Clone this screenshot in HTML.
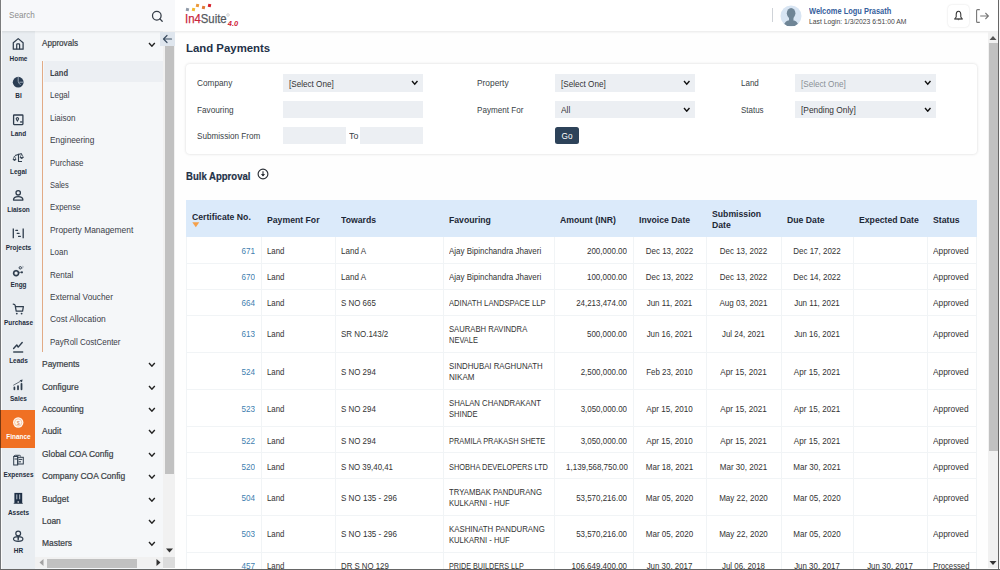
<!DOCTYPE html><html><head><meta charset="utf-8"><style>
*{box-sizing:border-box;margin:0;padding:0}
html,body{width:1000px;height:570px;overflow:hidden;background:#fff;font-family:"Liberation Sans",sans-serif;color:#333}
.a{position:absolute}
.t{position:absolute;white-space:nowrap;line-height:1}
</style></head><body>
<div class="a" style="left:175px;top:0px;width:825px;height:570px;background:#fefefe;"></div>
<div class="a" style="left:0px;top:31px;width:35px;height:539px;background:#e9edf1;"></div>
<div class="a" style="left:35px;top:31px;width:128px;height:539px;background:#f5f7f9;"></div>
<div class="a" style="left:0px;top:0px;width:1000px;height:31px;background:#fff;box-shadow:0 1px 2.5px rgba(0,0,0,0.09)"></div>
<div class="a" style="left:0px;top:0px;width:175px;height:31px;background:#f7f8fa;"></div>
<div class="t" style="left:9.00px;top:11px;font-size:9.2px;color:#8c8c8c;transform:scaleX(0.884);transform-origin:left">Search</div>
<svg class="a" style="left:149.5px;top:8.8px" width="15" height="15" viewBox="0 0 15 15"><circle cx="6.8" cy="6.7" r="4.3" fill="none" stroke="#353d47" stroke-width="1.25"/><line x1="9.9" y1="9.9" x2="12.2" y2="12.2" stroke="#353d47" stroke-width="1.3" stroke-linecap="round"/></svg>
<div class="a" style="left:163px;top:32px;width:12px;height:525px;background:#f1f1f1;"></div>
<div class="a" style="left:159.5px;top:32px;width:15.5px;height:14px;background:#dfe6ee;"></div>
<svg class="a" style="left:161px;top:33px" width="13" height="12" viewBox="0 0 13 12"><path d="M2.5 6 H10.5 M6 2.5 L2.5 6 L6 9.5" fill="none" stroke="#3d4f63" stroke-width="1.2" stroke-linecap="round" stroke-linejoin="round"/></svg>
<div class="a" style="left:165px;top:46px;width:9px;height:428px;background:#c1c1c1;"></div>
<svg class="a" style="left:166px;top:548px" width="7" height="5" viewBox="0 0 7 5"><path d="M0 0.5 H7 L3.5 4.5Z" fill="#333"/></svg>
<div class="a" style="left:35px;top:557px;width:128px;height:11px;background:#f1f1f1;"></div>
<div class="a" style="left:163px;top:557px;width:12px;height:11px;background:#dcdcdc;"></div>
<div class="a" style="left:47px;top:559px;width:90px;height:9px;background:#c1c1c1;"></div>
<svg class="a" style="left:39px;top:559px" width="5" height="7" viewBox="0 0 5 7"><path d="M4.5 0 V7 L0.5 3.5Z" fill="#a3a3a3"/></svg>
<svg class="a" style="left:156px;top:559px" width="5" height="7" viewBox="0 0 5 7"><path d="M0.5 0 V7 L4.5 3.5Z" fill="#333"/></svg>
<div class="a" style="left:988px;top:32px;width:10px;height:536px;background:#f1f1f1;"></div>
<svg class="a" style="left:989px;top:35px" width="8" height="6" viewBox="0 0 8 6"><path d="M0.5 5 H7.5 L4 1Z" fill="#555"/></svg>
<div class="a" style="left:989px;top:43px;width:9px;height:408px;background:#c1c1c1;"></div>
<svg class="a" style="left:989px;top:559.5px" width="8" height="6" viewBox="0 0 8 6"><path d="M0.5 1 H7.5 L4 5Z" fill="#333"/></svg>
<div class="a" style="left:0px;top:410px;width:35px;height:38px;background:#f07023;"></div>
<svg class="a" style="left:8px;top:34px" width="20" height="20" viewBox="0 0 20 20"><path d="M5.3 15.2 V8.8 L10.2 4.6 L15.1 8.8 V15.2 Z" fill="none" stroke="#2f3d4d" stroke-width="1.25" stroke-linejoin="round"/><path d="M8.7 15.2 V10.6 Q8.7 9.8 9.5 9.8 H10.8 Q11.6 9.8 11.6 10.6 V15.2" fill="none" stroke="#2f3d4d" stroke-width="1.2"/></svg>
<div class="t" style="left:0.50px;top:55px;font-size:7.0px;color:#1f2d3d;font-weight:bold;width:35px;text-align:center;transform:scaleX(0.92);transform-origin:center">Home</div>
<svg class="a" style="left:8px;top:72px" width="20" height="20" viewBox="0 0 20 20"><circle cx="10.2" cy="10.2" r="5.4" fill="#2b3d53"/><path d="M10.2 4.9 V9.3 Q10.4 11.2 12.6 12.9 M11.4 10.2 H15.6" fill="none" stroke="#b8c4d0" stroke-width="0.8"/></svg>
<div class="t" style="left:0.50px;top:92px;font-size:7.0px;color:#1f2d3d;font-weight:bold;width:35px;text-align:center;transform:scaleX(0.92);transform-origin:center">BI</div>
<svg class="a" style="left:8px;top:110px" width="20" height="20" viewBox="0 0 20 20"><rect x="5.6" y="5" width="9.3" height="9.6" fill="none" stroke="#2f3d4d" stroke-width="1.3" rx="0.5"/><path d="M9.4 12 L8 9.8 A1.7 1.7 0 1 1 10.8 9.8 Z" fill="#2f3d4d"/><circle cx="9.4" cy="8.9" r="0.6" fill="#fff"/><rect x="12.1" y="11.3" width="2.4" height="1.3" fill="#2f3d4d"/></svg>
<div class="t" style="left:0.50px;top:130px;font-size:7.0px;color:#1f2d3d;font-weight:bold;width:35px;text-align:center;transform:scaleX(0.92);transform-origin:center">Land</div>
<svg class="a" style="left:8px;top:148px" width="20" height="20" viewBox="0 0 20 20"><path d="M7 7.5 L13.7 5.4" stroke="#2f3d4d" stroke-width="1.1"/><path d="M10.5 5.8 V13.5 H14" fill="none" stroke="#2f3d4d" stroke-width="1.1"/><path d="M6.5 8 L5 11.5 H8 Z M13.7 6 L12 9.5 H15.4 Z" fill="none" stroke="#2f3d4d" stroke-width="0.7"/><path d="M4.8 11.3 Q6.5 14.8 8.3 11.3 Z M11.8 9.3 Q13.7 12.6 15.6 9.3 Z" fill="#2f3d4d"/></svg>
<div class="t" style="left:0.50px;top:168px;font-size:7.0px;color:#1f2d3d;font-weight:bold;width:35px;text-align:center;transform:scaleX(0.92);transform-origin:center">Legal</div>
<svg class="a" style="left:8px;top:186px" width="20" height="20" viewBox="0 0 20 20"><circle cx="10.2" cy="6.8" r="2.2" fill="none" stroke="#2f3d4d" stroke-width="1.3"/><path d="M5.5 14.1 Q5.5 10.6 10.2 10.6 Q14.9 10.6 14.9 14.1 Z" fill="none" stroke="#2f3d4d" stroke-width="1.3" stroke-linejoin="round"/></svg>
<div class="t" style="left:0.50px;top:206px;font-size:7.0px;color:#1f2d3d;font-weight:bold;width:35px;text-align:center;transform:scaleX(0.92);transform-origin:center">Liaison</div>
<svg class="a" style="left:8px;top:224px" width="20" height="20" viewBox="0 0 20 20"><path d="M5.3 4.5 V14.3 M15.2 4.5 V14.3" stroke="#2f3d4d" stroke-width="1.3"/><path d="M7.8 6.4 H9.6 M9.2 9.4 H11.1 M10.5 12.4 H12.4" stroke="#2f3d4d" stroke-width="1.1" stroke-linecap="round"/></svg>
<div class="t" style="left:0.50px;top:244px;font-size:7.0px;color:#1f2d3d;font-weight:bold;width:35px;text-align:center;transform:scaleX(0.92);transform-origin:center">Projects</div>
<svg class="a" style="left:8px;top:262px" width="20" height="20" viewBox="0 0 20 20"><circle cx="8.1" cy="11.2" r="2.4" fill="none" stroke="#2f3d4d" stroke-width="1.5"/><path d="M8.1 7.9 V8.6 M8.1 13.8 V14.5 M4.8 11.2 H5.5 M10.7 11.2 H11.4" stroke="#2f3d4d" stroke-width="1"/><circle cx="12.3" cy="5.8" r="1.2" fill="none" stroke="#2f3d4d" stroke-width="1"/><circle cx="13.9" cy="10.3" r="1.1" fill="#2f3d4d"/><path d="M11 10.3 H13" stroke="#2f3d4d" stroke-width="0.8"/><path d="M14.3 4.2 L15.2 4.5 L14.5 6.5" fill="none" stroke="#8994a0" stroke-width="0.7"/></svg>
<div class="t" style="left:0.50px;top:281px;font-size:7.0px;color:#1f2d3d;font-weight:bold;width:35px;text-align:center;transform:scaleX(0.92);transform-origin:center">Engg</div>
<svg class="a" style="left:8px;top:300px" width="20" height="20" viewBox="0 0 20 20"><path d="M5.2 4.1 Q6.8 4.1 7.1 5.2 L8.2 11.1 H14.6 L15.4 6.5 H7.4" fill="none" stroke="#2f3d4d" stroke-width="1.25" stroke-linejoin="round" stroke-linecap="round"/><circle cx="8.8" cy="13.6" r="0.9" fill="#2f3d4d"/><circle cx="13.6" cy="13.6" r="0.9" fill="#2f3d4d"/></svg>
<div class="t" style="left:0.50px;top:319px;font-size:7.0px;color:#1f2d3d;font-weight:bold;width:35px;text-align:center;transform:scaleX(0.92);transform-origin:center">Purchase</div>
<svg class="a" style="left:8px;top:338px" width="20" height="20" viewBox="0 0 20 20"><path d="M5.6 10.5 L8.8 7 L10.2 9.1 L14.2 4.5" fill="none" stroke="#2f3d4d" stroke-width="1.4" stroke-linecap="round" stroke-linejoin="round"/><path d="M5.2 14 H15.2" stroke="#2f3d4d" stroke-width="1.4"/></svg>
<div class="t" style="left:0.50px;top:357px;font-size:7.0px;color:#1f2d3d;font-weight:bold;width:35px;text-align:center;transform:scaleX(0.92);transform-origin:center">Leads</div>
<svg class="a" style="left:8px;top:375px" width="20" height="20" viewBox="0 0 20 20"><path d="M6.4 12.4 V14.3 M10 11 V14.3 M13.5 8.8 V14.3" stroke="#2f3d4d" stroke-width="1.75" stroke-linecap="round"/><path d="M5.3 10.3 L12.6 6.2" stroke="#56616d" stroke-width="0.9"/><path d="M11.6 5.3 L14.6 4.6 L13.9 7.6 Z" fill="#2f3d4d"/></svg>
<div class="t" style="left:0.50px;top:395px;font-size:7.0px;color:#1f2d3d;font-weight:bold;width:35px;text-align:center;transform:scaleX(0.92);transform-origin:center">Sales</div>
<svg class="a" style="left:8px;top:412px" width="20" height="20" viewBox="0 0 20 20"><circle cx="10.2" cy="10.5" r="5.2" fill="#fff6ef"/><circle cx="10.2" cy="10.5" r="3.6" fill="none" stroke="#f3a877" stroke-width="0.6"/><text x="10.2" y="12.6" text-anchor="middle" font-family="Liberation Sans" font-size="5.5" fill="#d78a5a">$</text></svg>
<div class="t" style="left:0.50px;top:433px;font-size:7.0px;color:#fff;font-weight:bold;width:35px;text-align:center;transform:scaleX(0.92);transform-origin:center">Finance</div>
<svg class="a" style="left:8px;top:450px" width="20" height="20" viewBox="0 0 20 20"><path d="M6 6.5 Q6 5.3 7.3 5.3 H11.5 Q12.6 5.3 12.6 6.5" fill="none" stroke="#2f3d4d" stroke-width="1"/><rect x="5.7" y="6.5" width="4" height="8.5" fill="none" stroke="#2f3d4d" stroke-width="1"/><rect x="9.7" y="7.3" width="5.6" height="6.7" fill="none" stroke="#2f3d4d" stroke-width="1"/><path d="M6.5 9 H9 M10.6 9.4 H14.3 M10.6 11.8 H13" stroke="#2f3d4d" stroke-width="1"/></svg>
<div class="t" style="left:0.50px;top:471px;font-size:7.0px;color:#1f2d3d;font-weight:bold;width:35px;text-align:center;transform:scaleX(0.92);transform-origin:center">Expenses</div>
<svg class="a" style="left:8px;top:488px" width="20" height="20" viewBox="0 0 20 20"><rect x="6.4" y="4.9" width="7.8" height="10.4" fill="#1f3046"/><path d="M8.8 6.4 V11.3 M11.7 6.4 V11.3" stroke="#b9c2cc" stroke-width="1"/><circle cx="10.2" cy="14" r="0.8" fill="#fff"/><path d="M5.7 15.4 H14.8" stroke="#2f3d4d" stroke-width="0.8"/></svg>
<div class="t" style="left:0.50px;top:509px;font-size:7.0px;color:#1f2d3d;font-weight:bold;width:35px;text-align:center;transform:scaleX(0.92);transform-origin:center">Assets</div>
<svg class="a" style="left:8px;top:525px" width="20" height="20" viewBox="0 0 20 20"><circle cx="10.2" cy="8.5" r="2.4" fill="none" stroke="#2f3d4d" stroke-width="1.2"/><ellipse cx="10.2" cy="14" rx="4.7" ry="2.3" fill="none" stroke="#2f3d4d" stroke-width="1.2"/><path d="M9.3 11.8 H11.1 L10.8 15.5 H9.6 Z" fill="#2f3d4d"/></svg>
<div class="t" style="left:0.50px;top:547px;font-size:7.0px;color:#1f2d3d;font-weight:bold;width:35px;text-align:center;transform:scaleX(0.92);transform-origin:center">HR</div>
<div class="t" style="left:42.00px;top:39px;font-size:8.8px;color:#3a3f46;transform:scaleX(0.92);transform-origin:left;-webkit-text-stroke:0.22px currentColor">Approvals</div>
<svg class="a" style="left:147.90px;top:41.80px" width="7.8" height="5.2" viewBox="0 0 7.8 5.2"><path d="M1 1 L3.9 4.2 L6.8 1" fill="none" stroke="#222" stroke-width="1.4"/></svg>
<div class="a" style="left:42px;top:61px;width:1.2px;height:291px;background:#e2ab86;"></div>
<div class="a" style="left:44px;top:61px;width:119px;height:21.3px;background:#eceff3;"></div>
<div class="t" style="left:50.00px;top:69px;font-size:9px;color:#3b4048;font-weight:bold;transform:scaleX(0.84);transform-origin:left">Land</div>
<div class="t" style="left:50.00px;top:91px;font-size:9px;color:#3b4048;transform:scaleX(0.89);transform-origin:left">Legal</div>
<div class="t" style="left:50.00px;top:114px;font-size:9px;color:#3b4048;transform:scaleX(0.893);transform-origin:left">Liaison</div>
<div class="t" style="left:50.00px;top:136px;font-size:9px;color:#3b4048;transform:scaleX(0.923);transform-origin:left">Engineering</div>
<div class="t" style="left:50.00px;top:159px;font-size:9px;color:#3b4048;transform:scaleX(0.879);transform-origin:left">Purchase</div>
<div class="t" style="left:50.00px;top:181px;font-size:9px;color:#3b4048;transform:scaleX(0.832);transform-origin:left">Sales</div>
<div class="t" style="left:50.00px;top:203px;font-size:9px;color:#3b4048;transform:scaleX(0.869);transform-origin:left">Expense</div>
<div class="t" style="left:50.00px;top:226px;font-size:9px;color:#3b4048;transform:scaleX(0.935);transform-origin:left">Property Management</div>
<div class="t" style="left:50.00px;top:248px;font-size:9px;color:#3b4048;transform:scaleX(0.895);transform-origin:left">Loan</div>
<div class="t" style="left:50.00px;top:271px;font-size:9px;color:#3b4048;transform:scaleX(0.898);transform-origin:left">Rental</div>
<div class="t" style="left:50.00px;top:293px;font-size:9px;color:#3b4048;transform:scaleX(0.918);transform-origin:left">External Voucher</div>
<div class="t" style="left:50.00px;top:315px;font-size:9px;color:#3b4048;transform:scaleX(0.937);transform-origin:left">Cost Allocation</div>
<div class="t" style="left:50.00px;top:338px;font-size:9px;color:#3b4048;transform:scaleX(0.892);transform-origin:left">PayRoll CostCenter</div>
<div class="t" style="left:42.00px;top:360px;font-size:8.8px;color:#3a3f46;transform:scaleX(0.96);transform-origin:left;-webkit-text-stroke:0.22px currentColor">Payments</div>
<svg class="a" style="left:147.90px;top:362.20px" width="7.8" height="5.2" viewBox="0 0 7.8 5.2"><path d="M1 1 L3.9 4.2 L6.8 1" fill="none" stroke="#222" stroke-width="1.4"/></svg>
<div class="t" style="left:42.00px;top:383px;font-size:8.8px;color:#3a3f46;transform:scaleX(0.96);transform-origin:left;-webkit-text-stroke:0.22px currentColor">Configure</div>
<svg class="a" style="left:147.90px;top:384.60px" width="7.8" height="5.2" viewBox="0 0 7.8 5.2"><path d="M1 1 L3.9 4.2 L6.8 1" fill="none" stroke="#222" stroke-width="1.4"/></svg>
<div class="t" style="left:42.00px;top:405px;font-size:8.8px;color:#3a3f46;transform:scaleX(0.96);transform-origin:left;-webkit-text-stroke:0.22px currentColor">Accounting</div>
<svg class="a" style="left:147.90px;top:407.00px" width="7.8" height="5.2" viewBox="0 0 7.8 5.2"><path d="M1 1 L3.9 4.2 L6.8 1" fill="none" stroke="#222" stroke-width="1.4"/></svg>
<div class="t" style="left:42.00px;top:427px;font-size:8.8px;color:#3a3f46;transform:scaleX(0.96);transform-origin:left;-webkit-text-stroke:0.22px currentColor">Audit</div>
<svg class="a" style="left:147.90px;top:429.40px" width="7.8" height="5.2" viewBox="0 0 7.8 5.2"><path d="M1 1 L3.9 4.2 L6.8 1" fill="none" stroke="#222" stroke-width="1.4"/></svg>
<div class="t" style="left:42.00px;top:450px;font-size:8.8px;color:#3a3f46;transform:scaleX(0.96);transform-origin:left;-webkit-text-stroke:0.22px currentColor">Global COA Config</div>
<svg class="a" style="left:147.90px;top:451.80px" width="7.8" height="5.2" viewBox="0 0 7.8 5.2"><path d="M1 1 L3.9 4.2 L6.8 1" fill="none" stroke="#222" stroke-width="1.4"/></svg>
<div class="t" style="left:42.00px;top:472px;font-size:8.8px;color:#3a3f46;transform:scaleX(0.96);transform-origin:left;-webkit-text-stroke:0.22px currentColor">Company COA Config</div>
<svg class="a" style="left:147.90px;top:474.20px" width="7.8" height="5.2" viewBox="0 0 7.8 5.2"><path d="M1 1 L3.9 4.2 L6.8 1" fill="none" stroke="#222" stroke-width="1.4"/></svg>
<div class="t" style="left:42.00px;top:495px;font-size:8.8px;color:#3a3f46;transform:scaleX(0.96);transform-origin:left;-webkit-text-stroke:0.22px currentColor">Budget</div>
<svg class="a" style="left:147.90px;top:496.60px" width="7.8" height="5.2" viewBox="0 0 7.8 5.2"><path d="M1 1 L3.9 4.2 L6.8 1" fill="none" stroke="#222" stroke-width="1.4"/></svg>
<div class="t" style="left:42.00px;top:517px;font-size:8.8px;color:#3a3f46;transform:scaleX(0.96);transform-origin:left;-webkit-text-stroke:0.22px currentColor">Loan</div>
<svg class="a" style="left:147.90px;top:519.00px" width="7.8" height="5.2" viewBox="0 0 7.8 5.2"><path d="M1 1 L3.9 4.2 L6.8 1" fill="none" stroke="#222" stroke-width="1.4"/></svg>
<div class="t" style="left:42.00px;top:539px;font-size:8.8px;color:#3a3f46;transform:scaleX(0.96);transform-origin:left;-webkit-text-stroke:0.22px currentColor">Masters</div>
<svg class="a" style="left:147.90px;top:541.40px" width="7.8" height="5.2" viewBox="0 0 7.8 5.2"><path d="M1 1 L3.9 4.2 L6.8 1" fill="none" stroke="#222" stroke-width="1.4"/></svg>
<div class="t" style="left:185.30px;top:12px;font-size:13.7px;color:#54595e;transform:scaleX(0.83);transform-origin:left;-webkit-text-stroke:0.25px currentColor"><span style="color:#c9253b">In4</span>Suite</div>
<div class="t" style="left:227.80px;top:20px;font-size:7.4px;color:#d02338;font-weight:bold;font-style:italic">4.0</div>
<svg class="a" style="left:226px;top:12.5px" width="4" height="4" viewBox="0 0 4 4"><circle cx="2" cy="2" r="1.3" fill="none" stroke="#aaa" stroke-width="0.5"/></svg>
<div class="a" style="left:185.89999999999998px;top:8.45px;width:2.6px;height:2.6px;background:#8f9aa8;transform:rotate(12deg)"></div>
<div class="a" style="left:191.9px;top:8.4px;width:3.2px;height:3.2px;background:#f1b934;transform:rotate(12deg)"></div>
<div class="a" style="left:196.2px;top:4.4px;width:3.0px;height:3.0px;background:#eb9a3c;transform:rotate(12deg)"></div>
<div class="a" style="left:202.14999999999998px;top:6.3500000000000005px;width:3.1px;height:3.1px;background:#e07a38;transform:rotate(12deg)"></div>
<div class="a" style="left:207.75px;top:3.75px;width:3.1px;height:3.1px;background:#d6222e;transform:rotate(12deg)"></div>
<div class="a" style="left:772px;top:8px;width:1px;height:14px;background:#cfd3d8;"></div>
<svg class="a" style="left:779.5px;top:5px" width="22" height="22" viewBox="0 0 22 22"><circle cx="11" cy="11" r="10.5" fill="#d8e5f3"/><clipPath id="cc"><circle cx="11" cy="11" r="10.5"/></clipPath><g clip-path="url(#cc)" fill="#6f8596"><ellipse cx="11.1" cy="8.3" rx="4.3" ry="5.3"/><path d="M8.8 12 H13.4 V15 Z"/><path d="M3.8 21 C4 17.5 6.5 15.3 11.1 15 C15.7 15.3 18.2 17.5 18.4 21 Z"/><rect x="9" y="12" width="4.2" height="4" /></g></svg>
<div class="t" style="left:809.00px;top:7px;font-size:8.4px;color:#35609c;font-weight:bold;transform:scaleX(0.89);transform-origin:left">Welcome Logu Prasath</div>
<div class="t" style="left:809.00px;top:18px;font-size:7.6px;color:#444;transform:scaleX(0.891);transform-origin:left">Last Login: 1/3/2023 6:51:00 AM</div>
<div class="a" style="left:948px;top:5px;width:21px;height:22px;background:#fff;border-radius:4px;box-shadow:0 0 2px rgba(0,0,0,0.15)"></div>
<svg class="a" style="left:953px;top:10px" width="11" height="12" viewBox="0 0 11 12"><path d="M5.5 1.3 C3.9 1.3 3.2 3 3.2 4.6 V7 L1.6 9 H9.4 L7.8 7 V4.6 C7.8 3 7.1 1.3 5.5 1.3Z" fill="none" stroke="#333" stroke-width="1.05" stroke-linejoin="round"/><path d="M2.5 8.4 H8.5 L9 9.2 H2 Z" fill="#555"/><path d="M4.4 9.6 Q5.5 11 6.6 9.6Z" fill="#333"/></svg>
<svg class="a" style="left:975px;top:8px" width="16" height="16" viewBox="0 0 16 16"><path d="M4.8 1.6 H2.6 Q1.6 1.6 1.6 2.6 V13.4 Q1.6 14.4 2.6 14.4 H4.8" fill="none" stroke="#777" stroke-width="1.1"/><path d="M5.2 8 H13.2 M10.4 5 L13.4 8 L10.4 11" fill="none" stroke="#777" stroke-width="1.1"/></svg>
<div class="t" style="left:186.00px;top:43px;font-size:11.4px;color:#1f3147;font-weight:bold">Land Payments</div>
<div class="a" style="left:186px;top:64px;width:791px;height:90px;background:#fff;border-radius:4px;box-shadow:0 0 3px rgba(0,0,0,0.16)"></div>
<div class="t" style="left:197.00px;top:79px;font-size:9px;color:#3a3f47;transform:scaleX(0.916);transform-origin:left">Company</div>
<div class="t" style="left:197.00px;top:106px;font-size:9px;color:#3a3f47;transform:scaleX(0.914);transform-origin:left">Favouring</div>
<div class="t" style="left:197.00px;top:132px;font-size:9px;color:#3a3f47;transform:scaleX(0.905);transform-origin:left">Submission From</div>
<div class="t" style="left:477.00px;top:79px;font-size:9px;color:#3a3f47;transform:scaleX(0.929);transform-origin:left">Property</div>
<div class="t" style="left:477.00px;top:106px;font-size:9px;color:#3a3f47;transform:scaleX(0.901);transform-origin:left">Payment For</div>
<div class="t" style="left:741.00px;top:79px;font-size:9px;color:#3a3f47;transform:scaleX(0.89);transform-origin:left">Land</div>
<div class="t" style="left:741.00px;top:106px;font-size:9px;color:#3a3f47;transform:scaleX(0.885);transform-origin:left">Status</div>
<div class="a" style="left:283px;top:74px;width:140px;height:18px;background:#eceff3;"></div>
<div class="t" style="left:289.00px;top:80px;font-size:9px;color:#333;transform:scaleX(0.903);transform-origin:left">[Select One]</div>
<svg class="a" style="left:410.75px;top:80.40px" width="7.5" height="5.2" viewBox="0 0 7.5 5.2"><path d="M1 1 L3.75 4.2 L6.5 1" fill="none" stroke="#111" stroke-width="1.4"/></svg>
<div class="a" style="left:283px;top:101px;width:140px;height:17px;background:#eceff3;"></div>
<div class="a" style="left:283px;top:127px;width:63px;height:17px;background:#eceff3;"></div>
<div class="t" style="left:349.00px;top:132px;font-size:9px;color:#3a3f47;transform:scaleX(0.979);transform-origin:left">To</div>
<div class="a" style="left:360px;top:127px;width:63px;height:17px;background:#eceff3;"></div>
<div class="a" style="left:555px;top:74px;width:140px;height:18px;background:#eceff3;"></div>
<div class="t" style="left:561.00px;top:80px;font-size:9px;color:#333;transform:scaleX(0.903);transform-origin:left">[Select One]</div>
<svg class="a" style="left:682.75px;top:80.40px" width="7.5" height="5.2" viewBox="0 0 7.5 5.2"><path d="M1 1 L3.75 4.2 L6.5 1" fill="none" stroke="#111" stroke-width="1.4"/></svg>
<div class="a" style="left:555px;top:101px;width:140px;height:17px;background:#eceff3;"></div>
<div class="t" style="left:561.00px;top:106px;font-size:9px;color:#333;transform:scaleX(0.937);transform-origin:left">All</div>
<svg class="a" style="left:682.75px;top:106.90px" width="7.5" height="5.2" viewBox="0 0 7.5 5.2"><path d="M1 1 L3.75 4.2 L6.5 1" fill="none" stroke="#111" stroke-width="1.4"/></svg>
<div class="a" style="left:555px;top:127px;width:24px;height:16.5px;background:#2d4259;border-radius:2.5px"></div>
<div class="t" style="left:555.00px;top:132px;font-size:9px;color:#fff;width:24px;text-align:center;transform:scaleX(0.91);transform-origin:center">Go</div>
<div class="a" style="left:795px;top:74px;width:141px;height:18px;background:#eceff3;"></div>
<div class="t" style="left:801.00px;top:80px;font-size:9px;color:#8a8f96;transform:scaleX(0.903);transform-origin:left">[Select One]</div>
<svg class="a" style="left:923.75px;top:80.40px" width="7.5" height="5.2" viewBox="0 0 7.5 5.2"><path d="M1 1 L3.75 4.2 L6.5 1" fill="none" stroke="#111" stroke-width="1.4"/></svg>
<div class="a" style="left:795px;top:101px;width:141px;height:17px;background:#eceff3;"></div>
<div class="t" style="left:801.00px;top:106px;font-size:9px;color:#333;transform:scaleX(0.928);transform-origin:left">[Pending Only]</div>
<svg class="a" style="left:923.75px;top:106.90px" width="7.5" height="5.2" viewBox="0 0 7.5 5.2"><path d="M1 1 L3.75 4.2 L6.5 1" fill="none" stroke="#111" stroke-width="1.4"/></svg>
<div class="t" style="left:186.00px;top:171px;font-size:10.5px;color:#1f3147;font-weight:bold;transform:scaleX(0.91);transform-origin:left;-webkit-text-stroke:0.2px currentColor">Bulk Approval</div>
<svg class="a" style="left:257.2px;top:167.6px" width="12" height="12" viewBox="0 0 12 12"><circle cx="6" cy="6" r="4.9" fill="none" stroke="#2a2f36" stroke-width="1.15"/><path d="M6 3.3 V7.9" stroke="#2a2f36" stroke-width="1.1"/><path d="M3.9 6 L6 8.4 L8.1 6 Z" fill="#2a2f36"/></svg>
<div class="a" style="left:186px;top:200px;width:790.5px;height:37px;background:#dbeafa;"></div>
<div class="t" style="left:192.00px;top:212px;font-size:9.4px;color:#1d2836;font-weight:bold;transform:scaleX(0.925);transform-origin:left">Certificate No.</div>
<div class="t" style="left:267.00px;top:215px;font-size:9.4px;color:#1d2836;font-weight:bold;transform:scaleX(0.925);transform-origin:left">Payment For</div>
<div class="t" style="left:341.00px;top:215px;font-size:9.4px;color:#1d2836;font-weight:bold;transform:scaleX(0.925);transform-origin:left">Towards</div>
<div class="t" style="left:449.00px;top:215px;font-size:9.4px;color:#1d2836;font-weight:bold;transform:scaleX(0.925);transform-origin:left">Favouring</div>
<div class="t" style="left:560.00px;top:215px;font-size:9.4px;color:#1d2836;font-weight:bold;transform:scaleX(0.925);transform-origin:left">Amount (INR)</div>
<div class="t" style="left:639.00px;top:215px;font-size:9.4px;color:#1d2836;font-weight:bold;transform:scaleX(0.925);transform-origin:left">Invoice Date</div>
<div class="t" style="left:712.00px;top:209px;font-size:9.4px;color:#1d2836;font-weight:bold;transform:scaleX(0.925);transform-origin:left">Submission</div>
<div class="t" style="left:712.00px;top:220px;font-size:9.4px;color:#1d2836;font-weight:bold;transform:scaleX(0.925);transform-origin:left">Date</div>
<div class="t" style="left:787.00px;top:215px;font-size:9.4px;color:#1d2836;font-weight:bold;transform:scaleX(0.925);transform-origin:left">Due Date</div>
<div class="t" style="left:859.00px;top:215px;font-size:9.4px;color:#1d2836;font-weight:bold;transform:scaleX(0.925);transform-origin:left">Expected Date</div>
<div class="t" style="left:933.00px;top:215px;font-size:9.4px;color:#1d2836;font-weight:bold;transform:scaleX(0.925);transform-origin:left">Status</div>
<svg class="a" style="left:192px;top:221.5px" width="8" height="6" viewBox="0 0 8 6"><path d="M0.3 0.3 H7.3 L3.8 5.2Z" fill="#f5a04a"/></svg>
<div class="a" style="left:186px;top:237px;width:790px;height:333px;background:#fff;"></div>
<div class="a" style="left:186px;top:263px;width:790px;height:1px;background:#f1f4f6;"></div>
<div class="a" style="left:186px;top:289px;width:790px;height:1px;background:#f1f4f6;"></div>
<div class="a" style="left:186px;top:315px;width:790px;height:1px;background:#f1f4f6;"></div>
<div class="a" style="left:186px;top:352px;width:790px;height:1px;background:#f1f4f6;"></div>
<div class="a" style="left:186px;top:389px;width:790px;height:1px;background:#f1f4f6;"></div>
<div class="a" style="left:186px;top:426px;width:790px;height:1px;background:#f1f4f6;"></div>
<div class="a" style="left:186px;top:452px;width:790px;height:1px;background:#f1f4f6;"></div>
<div class="a" style="left:186px;top:478px;width:790px;height:1px;background:#f1f4f6;"></div>
<div class="a" style="left:186px;top:515px;width:790px;height:1px;background:#f1f4f6;"></div>
<div class="a" style="left:186px;top:552px;width:790px;height:1px;background:#f1f4f6;"></div>
<div class="a" style="left:186px;top:578px;width:790px;height:1px;background:#f1f4f6;"></div>
<div class="a" style="left:186px;top:237px;width:1px;height:333px;background:#f1f4f6;"></div>
<div class="a" style="left:261px;top:237px;width:1px;height:333px;background:#f1f4f6;"></div>
<div class="a" style="left:335px;top:237px;width:1px;height:333px;background:#f1f4f6;"></div>
<div class="a" style="left:443px;top:237px;width:1px;height:333px;background:#f1f4f6;"></div>
<div class="a" style="left:554px;top:237px;width:1px;height:333px;background:#f1f4f6;"></div>
<div class="a" style="left:633px;top:237px;width:1px;height:333px;background:#f1f4f6;"></div>
<div class="a" style="left:706px;top:237px;width:1px;height:333px;background:#f1f4f6;"></div>
<div class="a" style="left:781px;top:237px;width:1px;height:333px;background:#f1f4f6;"></div>
<div class="a" style="left:853px;top:237px;width:1px;height:333px;background:#f1f4f6;"></div>
<div class="a" style="left:927px;top:237px;width:1px;height:333px;background:#f1f4f6;"></div>
<div class="a" style="left:976px;top:237px;width:1px;height:333px;background:#f1f4f6;"></div>
<div class="t" style="left:186.00px;top:246px;font-size:9.5px;color:#3f7fb0;width:69px;text-align:right;transform:scaleX(0.857);transform-origin:right">671</div>
<div class="t" style="left:267.00px;top:246px;font-size:9.5px;color:#333;transform:scaleX(0.828);transform-origin:left">Land</div>
<div class="t" style="left:341.00px;top:246px;font-size:9.5px;color:#333;transform:scaleX(0.845);transform-origin:left">Land A</div>
<div class="t" style="left:449.00px;top:246px;font-size:9.5px;color:#333;transform:scaleX(0.839);transform-origin:left">Ajay Bipinchandra Jhaveri</div>
<div class="t" style="left:554.00px;top:246px;font-size:9.5px;color:#333;width:73px;text-align:right;transform:scaleX(0.842);transform-origin:right">200,000.00</div>
<div class="t" style="left:633.00px;top:246px;font-size:9.5px;color:#333;width:73px;text-align:center;transform:scaleX(0.839);transform-origin:center">Dec 13, 2022</div>
<div class="t" style="left:706.00px;top:246px;font-size:9.5px;color:#333;width:75px;text-align:center;transform:scaleX(0.839);transform-origin:center">Dec 13, 2022</div>
<div class="t" style="left:781.00px;top:246px;font-size:9.5px;color:#333;width:72px;text-align:center;transform:scaleX(0.839);transform-origin:center">Dec 17, 2022</div>
<div class="t" style="left:933.00px;top:246px;font-size:9.5px;color:#333;transform:scaleX(0.876);transform-origin:left">Approved</div>
<div class="t" style="left:186.00px;top:272px;font-size:9.5px;color:#3f7fb0;width:69px;text-align:right;transform:scaleX(0.857);transform-origin:right">670</div>
<div class="t" style="left:267.00px;top:272px;font-size:9.5px;color:#333;transform:scaleX(0.828);transform-origin:left">Land</div>
<div class="t" style="left:341.00px;top:272px;font-size:9.5px;color:#333;transform:scaleX(0.845);transform-origin:left">Land A</div>
<div class="t" style="left:449.00px;top:272px;font-size:9.5px;color:#333;transform:scaleX(0.839);transform-origin:left">Ajay Bipinchandra Jhaveri</div>
<div class="t" style="left:554.00px;top:272px;font-size:9.5px;color:#333;width:73px;text-align:right;transform:scaleX(0.842);transform-origin:right">100,000.00</div>
<div class="t" style="left:633.00px;top:272px;font-size:9.5px;color:#333;width:73px;text-align:center;transform:scaleX(0.839);transform-origin:center">Dec 13, 2022</div>
<div class="t" style="left:706.00px;top:272px;font-size:9.5px;color:#333;width:75px;text-align:center;transform:scaleX(0.839);transform-origin:center">Dec 13, 2022</div>
<div class="t" style="left:781.00px;top:272px;font-size:9.5px;color:#333;width:72px;text-align:center;transform:scaleX(0.839);transform-origin:center">Dec 14, 2022</div>
<div class="t" style="left:933.00px;top:272px;font-size:9.5px;color:#333;transform:scaleX(0.876);transform-origin:left">Approved</div>
<div class="t" style="left:186.00px;top:298px;font-size:9.5px;color:#3f7fb0;width:69px;text-align:right;transform:scaleX(0.857);transform-origin:right">664</div>
<div class="t" style="left:267.00px;top:298px;font-size:9.5px;color:#333;transform:scaleX(0.828);transform-origin:left">Land</div>
<div class="t" style="left:341.00px;top:298px;font-size:9.5px;color:#333;transform:scaleX(0.834);transform-origin:left">S NO 665</div>
<div class="t" style="left:449.00px;top:298px;font-size:9.5px;color:#333;transform:scaleX(0.805);transform-origin:left">ADINATH LANDSPACE LLP</div>
<div class="t" style="left:554.00px;top:298px;font-size:9.5px;color:#333;width:73px;text-align:right;transform:scaleX(0.837);transform-origin:right">24,213,474.00</div>
<div class="t" style="left:633.00px;top:298px;font-size:9.5px;color:#333;width:73px;text-align:center;transform:scaleX(0.842);transform-origin:center">Jun 11, 2021</div>
<div class="t" style="left:706.00px;top:298px;font-size:9.5px;color:#333;width:75px;text-align:center;transform:scaleX(0.851);transform-origin:center">Aug 03, 2021</div>
<div class="t" style="left:781.00px;top:298px;font-size:9.5px;color:#333;width:72px;text-align:center;transform:scaleX(0.842);transform-origin:center">Jun 11, 2021</div>
<div class="t" style="left:933.00px;top:298px;font-size:9.5px;color:#333;transform:scaleX(0.876);transform-origin:left">Approved</div>
<div class="t" style="left:186.00px;top:329px;font-size:9.5px;color:#3f7fb0;width:69px;text-align:right;transform:scaleX(0.857);transform-origin:right">613</div>
<div class="t" style="left:267.00px;top:329px;font-size:9.5px;color:#333;transform:scaleX(0.828);transform-origin:left">Land</div>
<div class="t" style="left:341.00px;top:329px;font-size:9.5px;color:#333;transform:scaleX(0.837);transform-origin:left">SR NO.143/2</div>
<div class="t" style="left:449.00px;top:324px;font-size:9.5px;color:#333;transform:scaleX(0.807);transform-origin:left">SAURABH RAVINDRA</div>
<div class="t" style="left:449.00px;top:335px;font-size:9.5px;color:#333;transform:scaleX(0.787);transform-origin:left">NEVALE</div>
<div class="t" style="left:554.00px;top:329px;font-size:9.5px;color:#333;width:73px;text-align:right;transform:scaleX(0.842);transform-origin:right">500,000.00</div>
<div class="t" style="left:633.00px;top:329px;font-size:9.5px;color:#333;width:73px;text-align:center;transform:scaleX(0.831);transform-origin:center">Jun 16, 2021</div>
<div class="t" style="left:706.00px;top:329px;font-size:9.5px;color:#333;width:75px;text-align:center;transform:scaleX(0.83);transform-origin:center">Jul 24, 2021</div>
<div class="t" style="left:781.00px;top:329px;font-size:9.5px;color:#333;width:72px;text-align:center;transform:scaleX(0.831);transform-origin:center">Jun 16, 2021</div>
<div class="t" style="left:933.00px;top:329px;font-size:9.5px;color:#333;transform:scaleX(0.876);transform-origin:left">Approved</div>
<div class="t" style="left:186.00px;top:367px;font-size:9.5px;color:#3f7fb0;width:69px;text-align:right;transform:scaleX(0.857);transform-origin:right">524</div>
<div class="t" style="left:267.00px;top:367px;font-size:9.5px;color:#333;transform:scaleX(0.828);transform-origin:left">Land</div>
<div class="t" style="left:341.00px;top:367px;font-size:9.5px;color:#333;transform:scaleX(0.834);transform-origin:left">S NO 294</div>
<div class="t" style="left:449.00px;top:361px;font-size:9.5px;color:#333;transform:scaleX(0.822);transform-origin:left">SINDHUBAI RAGHUNATH</div>
<div class="t" style="left:449.00px;top:372px;font-size:9.5px;color:#333;transform:scaleX(0.846);transform-origin:left">NIKAM</div>
<div class="t" style="left:554.00px;top:367px;font-size:9.5px;color:#333;width:73px;text-align:right;transform:scaleX(0.835);transform-origin:right">2,500,000.00</div>
<div class="t" style="left:633.00px;top:367px;font-size:9.5px;color:#333;width:73px;text-align:center;transform:scaleX(0.831);transform-origin:center">Feb 23, 2010</div>
<div class="t" style="left:706.00px;top:367px;font-size:9.5px;color:#333;width:75px;text-align:center;transform:scaleX(0.851);transform-origin:center">Apr 15, 2021</div>
<div class="t" style="left:781.00px;top:367px;font-size:9.5px;color:#333;width:72px;text-align:center;transform:scaleX(0.851);transform-origin:center">Apr 15, 2021</div>
<div class="t" style="left:933.00px;top:367px;font-size:9.5px;color:#333;transform:scaleX(0.876);transform-origin:left">Approved</div>
<div class="t" style="left:186.00px;top:404px;font-size:9.5px;color:#3f7fb0;width:69px;text-align:right;transform:scaleX(0.857);transform-origin:right">523</div>
<div class="t" style="left:267.00px;top:404px;font-size:9.5px;color:#333;transform:scaleX(0.828);transform-origin:left">Land</div>
<div class="t" style="left:341.00px;top:404px;font-size:9.5px;color:#333;transform:scaleX(0.834);transform-origin:left">S NO 294</div>
<div class="t" style="left:449.00px;top:398px;font-size:9.5px;color:#333;transform:scaleX(0.814);transform-origin:left">SHALAN CHANDRAKANT</div>
<div class="t" style="left:449.00px;top:409px;font-size:9.5px;color:#333;transform:scaleX(0.798);transform-origin:left">SHINDE</div>
<div class="t" style="left:554.00px;top:404px;font-size:9.5px;color:#333;width:73px;text-align:right;transform:scaleX(0.835);transform-origin:right">3,050,000.00</div>
<div class="t" style="left:633.00px;top:404px;font-size:9.5px;color:#333;width:73px;text-align:center;transform:scaleX(0.851);transform-origin:center">Apr 15, 2010</div>
<div class="t" style="left:706.00px;top:404px;font-size:9.5px;color:#333;width:75px;text-align:center;transform:scaleX(0.851);transform-origin:center">Apr 15, 2021</div>
<div class="t" style="left:781.00px;top:404px;font-size:9.5px;color:#333;width:72px;text-align:center;transform:scaleX(0.851);transform-origin:center">Apr 15, 2021</div>
<div class="t" style="left:933.00px;top:404px;font-size:9.5px;color:#333;transform:scaleX(0.876);transform-origin:left">Approved</div>
<div class="t" style="left:186.00px;top:436px;font-size:9.5px;color:#3f7fb0;width:69px;text-align:right;transform:scaleX(0.857);transform-origin:right">522</div>
<div class="t" style="left:267.00px;top:436px;font-size:9.5px;color:#333;transform:scaleX(0.828);transform-origin:left">Land</div>
<div class="t" style="left:341.00px;top:436px;font-size:9.5px;color:#333;transform:scaleX(0.834);transform-origin:left">S NO 294</div>
<div class="t" style="left:449.00px;top:436px;font-size:9.5px;color:#333;transform:scaleX(0.779);transform-origin:left">PRAMILA PRAKASH SHETE</div>
<div class="t" style="left:554.00px;top:436px;font-size:9.5px;color:#333;width:73px;text-align:right;transform:scaleX(0.835);transform-origin:right">3,050,000.00</div>
<div class="t" style="left:633.00px;top:436px;font-size:9.5px;color:#333;width:73px;text-align:center;transform:scaleX(0.851);transform-origin:center">Apr 15, 2010</div>
<div class="t" style="left:706.00px;top:436px;font-size:9.5px;color:#333;width:75px;text-align:center;transform:scaleX(0.851);transform-origin:center">Apr 15, 2021</div>
<div class="t" style="left:781.00px;top:436px;font-size:9.5px;color:#333;width:72px;text-align:center;transform:scaleX(0.851);transform-origin:center">Apr 15, 2021</div>
<div class="t" style="left:933.00px;top:436px;font-size:9.5px;color:#333;transform:scaleX(0.876);transform-origin:left">Approved</div>
<div class="t" style="left:186.00px;top:462px;font-size:9.5px;color:#3f7fb0;width:69px;text-align:right;transform:scaleX(0.857);transform-origin:right">520</div>
<div class="t" style="left:267.00px;top:462px;font-size:9.5px;color:#333;transform:scaleX(0.828);transform-origin:left">Land</div>
<div class="t" style="left:341.00px;top:462px;font-size:9.5px;color:#333;transform:scaleX(0.826);transform-origin:left">S NO 39,40,41</div>
<div class="t" style="left:449.00px;top:462px;font-size:9.5px;color:#333;transform:scaleX(0.782);transform-origin:left">SHOBHA DEVELOPERS LTD</div>
<div class="t" style="left:554.00px;top:462px;font-size:9.5px;color:#333;width:73px;text-align:right;transform:scaleX(0.834);transform-origin:right">1,139,568,750.00</div>
<div class="t" style="left:633.00px;top:462px;font-size:9.5px;color:#333;width:73px;text-align:center;transform:scaleX(0.849);transform-origin:center">Mar 18, 2021</div>
<div class="t" style="left:706.00px;top:462px;font-size:9.5px;color:#333;width:75px;text-align:center;transform:scaleX(0.849);transform-origin:center">Mar 30, 2021</div>
<div class="t" style="left:781.00px;top:462px;font-size:9.5px;color:#333;width:72px;text-align:center;transform:scaleX(0.849);transform-origin:center">Mar 30, 2021</div>
<div class="t" style="left:933.00px;top:462px;font-size:9.5px;color:#333;transform:scaleX(0.876);transform-origin:left">Approved</div>
<div class="t" style="left:186.00px;top:493px;font-size:9.5px;color:#3f7fb0;width:69px;text-align:right;transform:scaleX(0.857);transform-origin:right">504</div>
<div class="t" style="left:267.00px;top:493px;font-size:9.5px;color:#333;transform:scaleX(0.828);transform-origin:left">Land</div>
<div class="t" style="left:341.00px;top:493px;font-size:9.5px;color:#333;transform:scaleX(0.847);transform-origin:left">S NO 135 - 296</div>
<div class="t" style="left:449.00px;top:487px;font-size:9.5px;color:#333;transform:scaleX(0.815);transform-origin:left">TRYAMBAK PANDURANG</div>
<div class="t" style="left:449.00px;top:498px;font-size:9.5px;color:#333;transform:scaleX(0.804);transform-origin:left">KULKARNI - HUF</div>
<div class="t" style="left:554.00px;top:493px;font-size:9.5px;color:#333;width:73px;text-align:right;transform:scaleX(0.837);transform-origin:right">53,570,216.00</div>
<div class="t" style="left:633.00px;top:493px;font-size:9.5px;color:#333;width:73px;text-align:center;transform:scaleX(0.849);transform-origin:center">Mar 05, 2020</div>
<div class="t" style="left:706.00px;top:493px;font-size:9.5px;color:#333;width:75px;text-align:center;transform:scaleX(0.846);transform-origin:center">May 22, 2020</div>
<div class="t" style="left:781.00px;top:493px;font-size:9.5px;color:#333;width:72px;text-align:center;transform:scaleX(0.849);transform-origin:center">Mar 05, 2020</div>
<div class="t" style="left:933.00px;top:493px;font-size:9.5px;color:#333;transform:scaleX(0.876);transform-origin:left">Approved</div>
<div class="t" style="left:186.00px;top:529px;font-size:9.5px;color:#3f7fb0;width:69px;text-align:right;transform:scaleX(0.857);transform-origin:right">503</div>
<div class="t" style="left:267.00px;top:529px;font-size:9.5px;color:#333;transform:scaleX(0.828);transform-origin:left">Land</div>
<div class="t" style="left:341.00px;top:529px;font-size:9.5px;color:#333;transform:scaleX(0.847);transform-origin:left">S NO 135 - 296</div>
<div class="t" style="left:449.00px;top:524px;font-size:9.5px;color:#333;transform:scaleX(0.824);transform-origin:left">KASHINATH PANDURANG</div>
<div class="t" style="left:449.00px;top:535px;font-size:9.5px;color:#333;transform:scaleX(0.804);transform-origin:left">KULKARNI - HUF</div>
<div class="t" style="left:554.00px;top:529px;font-size:9.5px;color:#333;width:73px;text-align:right;transform:scaleX(0.837);transform-origin:right">53,570,216.00</div>
<div class="t" style="left:633.00px;top:529px;font-size:9.5px;color:#333;width:73px;text-align:center;transform:scaleX(0.849);transform-origin:center">Mar 05, 2020</div>
<div class="t" style="left:706.00px;top:529px;font-size:9.5px;color:#333;width:75px;text-align:center;transform:scaleX(0.846);transform-origin:center">May 22, 2020</div>
<div class="t" style="left:781.00px;top:529px;font-size:9.5px;color:#333;width:72px;text-align:center;transform:scaleX(0.849);transform-origin:center">Mar 05, 2020</div>
<div class="t" style="left:933.00px;top:529px;font-size:9.5px;color:#333;transform:scaleX(0.876);transform-origin:left">Approved</div>
<div class="t" style="left:186.00px;top:561px;font-size:9.5px;color:#3f7fb0;width:69px;text-align:right;transform:scaleX(0.857);transform-origin:right">457</div>
<div class="t" style="left:267.00px;top:561px;font-size:9.5px;color:#333;transform:scaleX(0.828);transform-origin:left">Land</div>
<div class="t" style="left:341.00px;top:561px;font-size:9.5px;color:#333;transform:scaleX(0.823);transform-origin:left">DR S NO 129</div>
<div class="t" style="left:449.00px;top:561px;font-size:9.5px;color:#333;transform:scaleX(0.758);transform-origin:left">PRIDE BUILDERS LLP</div>
<div class="t" style="left:554.00px;top:561px;font-size:9.5px;color:#333;width:73px;text-align:right;transform:scaleX(0.839);transform-origin:right">106,649,400.00</div>
<div class="t" style="left:633.00px;top:561px;font-size:9.5px;color:#333;width:73px;text-align:center;transform:scaleX(0.831);transform-origin:center">Jun 30, 2017</div>
<div class="t" style="left:706.00px;top:561px;font-size:9.5px;color:#333;width:75px;text-align:center;transform:scaleX(0.83);transform-origin:center">Jul 06, 2018</div>
<div class="t" style="left:781.00px;top:561px;font-size:9.5px;color:#333;width:72px;text-align:center;transform:scaleX(0.831);transform-origin:center">Jun 30, 2017</div>
<div class="t" style="left:853.00px;top:561px;font-size:9.5px;color:#333;width:74px;text-align:center;transform:scaleX(0.831);transform-origin:center">Jun 30, 2017</div>
<div class="t" style="left:933.00px;top:561px;font-size:9.5px;color:#333;transform:scaleX(0.812);transform-origin:left">Processed</div>
<div class="a" style="left:1px;top:0px;width:1px;height:410px;background:#fbfbfb;"></div>
<div class="a" style="left:1px;top:448px;width:1px;height:121px;background:#fbfbfb;"></div>
<div class="a" style="left:0px;top:0px;width:1px;height:570px;background:rgba(0,0,0,0.5);"></div>
<div class="a" style="left:998px;top:0px;width:1px;height:570px;background:#666;"></div>
<div class="a" style="left:999px;top:0px;width:1px;height:568px;background:#fafafa;"></div>
<div class="a" style="left:0px;top:568.8px;width:1000px;height:1.2px;background:#666;"></div>
</body></html>
